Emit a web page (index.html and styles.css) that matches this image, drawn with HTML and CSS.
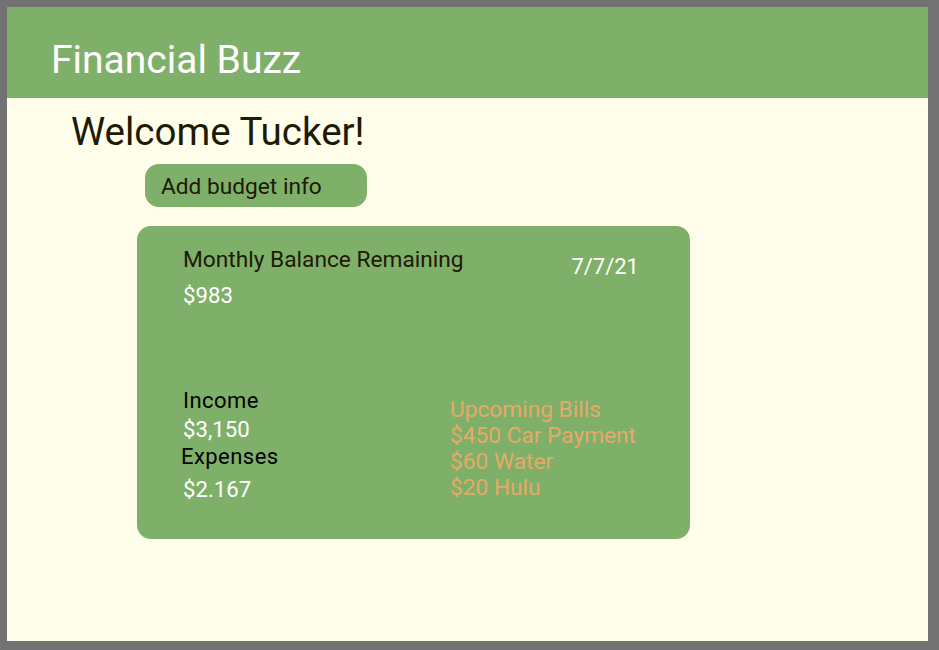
FILE: index.html
```html
<!DOCTYPE html>
<html lang="en">
<head>
<meta charset="utf-8">
<title>Financial Buzz</title>
<link rel="stylesheet" href="styles.css">
</head>
<body>
<div class="frame">
  <header class="topbar">
    <h1 class="brand">Financial Buzz</h1>
  </header>
  <main class="content">
    <h2 class="welcome">Welcome Tucker!</h2>
    <button class="add-btn" type="button">Add budget info</button>
    <section class="card">
      <div class="card-top">
        <div class="balance">
          <div class="label">Monthly Balance Remaining</div>
          <div class="value value-balance">$983</div>
        </div>
        <div class="date">7/7/21</div>
      </div>
      <div class="card-bottom">
        <div class="totals">
          <div class="label row">Income</div>
          <div class="value row">$3,150</div>
          <div class="label row shift">Expenses</div>
          <div class="value row gap">$2.167</div>
        </div>
        <ul class="bills">
          <li>Upcoming Bills</li>
          <li>$450 Car Payment</li>
          <li>$60 Water</li>
          <li>$20 Hulu</li>
        </ul>
      </div>
    </section>
  </main>
</div>
</body>
</html>
```
FILE: styles.css
```css
* { box-sizing: border-box; }

html, body {
  margin: 0;
  padding: 0;
  background: #727272;
  height: 100%;
}

body {
  font-family: Roboto, "Liberation Sans", Arial, sans-serif;
}

.frame {
  margin: 7px 11px 9px 7px;
  height: 634px;
  background: #fefeeb;
  overflow: hidden;
}

.topbar {
  height: 91px;
  background: #7fb069;
  padding: 29.5px 0 0 44px;
}

.brand {
  margin: 0;
  font-size: 39px;
  font-weight: 400;
  line-height: normal;
  color: #ffffff;
}

.welcome {
  margin: 11px 0 0 64px;
  font-size: 38.5px;
  font-weight: 400;
  line-height: normal;
  color: #1d1a05;
}

.add-btn {
  display: block;
  margin: 9.9px 0 0 138px;
  width: 222px;
  height: 43px;
  padding: 2px 0 0 16px;
  border: none;
  border-radius: 14px;
  background: #7fb069;
  color: #1d1a05;
  font-family: inherit;
  font-size: 22.7px;
  line-height: 41px;
  text-align: left;
}

.card {
  margin: 19px 0 0 130px;
  width: 553px;
  height: 313px;
  border-radius: 14px;
  background: #7fb069;
  padding: 22.5px 51px 0 46px;
}

.card-top {
  display: flex;
  justify-content: space-between;
  align-items: flex-start;
}

.label {
  font-size: 22.7px;
  line-height: 24px;
  color: #1d1a05;
}

.value {
  font-size: 22.2px;
  line-height: 28px;
  color: #ffffff;
}

.value-balance {
  margin-top: 8.5px;
}

.date {
  margin-top: 6.5px;
  font-size: 22px;
  line-height: 24px;
  color: #ffffff;
}

.card-bottom {
  display: grid;
  grid-template-columns: 267px 1fr;
  margin-top: 78px;
}

.totals .row {
  line-height: 28px;
}

.totals .label {
  font-size: 22px;
  letter-spacing: 0.45px;
  color: #000000;
}

.totals .shift {
  margin-left: -2px;
}

.totals .gap {
  margin-top: 4px;
}

.bills {
  list-style: none;
  margin: 10px 0 0 0;
  padding: 0;
  font-size: 22.7px;
  line-height: 26px;
  color: #e6aa68;
}
```
